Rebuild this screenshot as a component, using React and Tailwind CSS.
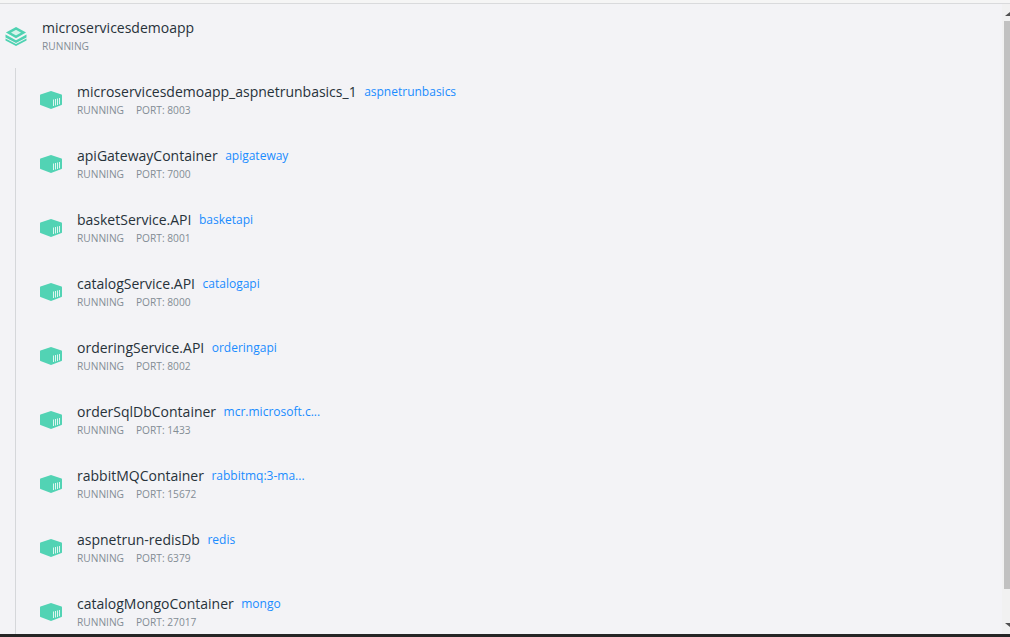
const containers = [
  { name: "microservicesdemoapp_aspnetrunbasics_1", image: "aspnetrunbasics", port: 8003 },
  { name: "apiGatewayContainer", image: "apigateway", port: 7000 },
  { name: "basketService.API", image: "basketapi", port: 8001 },
  { name: "catalogService.API", image: "catalogapi", port: 8000 },
  { name: "orderingService.API", image: "orderingapi", port: 8002 },
  { name: "orderSqlDbContainer", image: "mcr.microsoft.c...", port: 1433 },
  { name: "rabbitMQContainer", image: "rabbitmq:3-ma...", port: 15672 },
  { name: "aspnetrun-redisDb", image: "redis", port: 6379 },
  { name: "catalogMongoContainer", image: "mongo", port: 27017 },
];

const StackIcon = () => (
  <svg width="22" height="19" viewBox="0 0 22 19" className="shrink-0">
    <path d="M11 1.4 18.6 5.6 11 9.8 3.4 5.6Z" fill="#d5f3ea" stroke="#4fd2b2" strokeWidth="2.4" />
    <path d="M0.5 7.6 11 13.2 21.5 7.6V10.4L11 16 0.5 10.4Z" fill="#4fd2b2" />
    <path d="M0.5 11.6 11 17 21.5 11.6V13.6L11 19 0.5 13.6Z" fill="#4fd2b2" />
  </svg>
);

const ContainerIcon = () => (
  <svg width="22" height="18" viewBox="0 0 22 18" className="shrink-0">
    <path d="M11 0 21.5 3.5Q22 3.7 22 4.4V13.2Q22 13.8 21.5 14L11 18 .5 14Q0 13.8 0 13.2V4.4Q0 3.7 .5 3.5Z" fill="#52d3b4" />
    <path d="M13 8.5H14V15H13ZM15 8H16V14.5H15ZM17 7.5H18V14H17ZM19 7H20V13.2H19Z" fill="#dff6f0" />
  </svg>
);

const ContainerRow = ({ name, image, port }) => (
  <div className="flex h-[64px] items-center pl-[24px]">
    <ContainerIcon />
    <div className="ml-[15px] flex min-w-0 flex-col">
      <div className="flex h-[20px] items-center">
        <span className="text-[14px] text-[#27323a]">{name}</span>
        <span className="ml-[7.5px] text-[12px] text-[#1a8cff]">{image}</span>
      </div>
      <div className="mt-[1px] flex h-[16px] items-center gap-[12px] text-[10.2px] text-[#838d95]">
        <span>RUNNING</span>
        <span>PORT: {port}</span>
      </div>
    </div>
  </div>
);

const Scrollbar = () => (
  <div className="flex w-[8px] shrink-0 flex-col overflow-hidden bg-[#f1f1f1]">
    <div className="ml-[2px] mt-[8px] h-0 w-0 translate-x-[1px] border-x-[5px] border-b-[4px] border-x-transparent border-b-[#505050]" />
    <div className="ml-[2px] mt-[5px] h-[568px] w-[6px] bg-[#c1c1c1]" />
    <div className="ml-[2px] mt-[34px] h-0 w-0 translate-x-[1px] border-x-[5px] border-t-[4px] border-x-transparent border-t-[#505050]" />
  </div>
);

export default function App() {
  return (
    <div className="flex h-[637px] w-[1010px] flex-col overflow-hidden bg-[#f3f3f6] font-['Open_Sans',sans-serif]">
      <div className="h-[4px] shrink-0 border-b border-[#d9dadc] bg-[#f5f5f5]" />
      <div className="flex min-h-0 flex-1">
        <div className="min-w-0 flex-1 overflow-hidden">
          <div className="flex h-[64px] items-start pl-[5px] pt-[14px]">
            <div className="mt-[9px]">
              <StackIcon />
            </div>
            <div className="ml-[15px] flex flex-col">
              <span className="h-[20px] text-[14px] leading-[20px] text-[#27323a]">microservicesdemoapp</span>
              <span className="h-[16px] text-[10.2px] leading-[16px] text-[#838d95]">RUNNING</span>
            </div>
          </div>
          <div className="ml-[15px] border-l border-[#d5d7da]">
            {containers.map((c) => (
              <ContainerRow key={c.name} {...c} />
            ))}
          </div>
        </div>
        <Scrollbar />
      </div>
      <div className="h-[3px] shrink-0 bg-[#252525]" />
    </div>
  );
}
